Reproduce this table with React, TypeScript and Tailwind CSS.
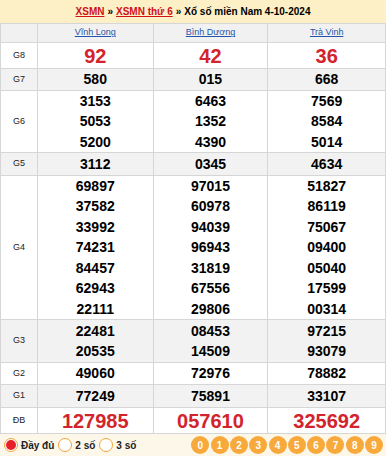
import React from "react";

const border = "border-[#d6d6d6]";

type Row = { label: string; vals: string[][]; h: string; grey: boolean; big?: boolean };

const rows: Row[] = [
  { label: "G8", vals: [["92"], ["42"], ["36"]], h: "h-[26px]", grey: false, big: true },
  { label: "G7", vals: [["580"], ["015"], ["668"]], h: "h-[22px]", grey: true },
  {
    label: "G6",
    vals: [
      ["3153", "5053", "5200"],
      ["6463", "1352", "4390"],
      ["7569", "8584", "5014"],
    ],
    h: "h-[62px]",
    grey: false,
  },
  { label: "G5", vals: [["3112"], ["0345"], ["4634"]], h: "h-[23px]", grey: true },
  {
    label: "G4",
    vals: [
      ["69897", "37582", "33992", "74231", "84457", "62943", "22111"],
      ["97015", "60978", "94039", "96943", "31819", "67556", "29806"],
      ["51827", "86119", "75067", "09400", "05040", "17599", "00314"],
    ],
    h: "h-[144px]",
    grey: false,
  },
  {
    label: "G3",
    vals: [
      ["22481", "20535"],
      ["08453", "14509"],
      ["97215", "93079"],
    ],
    h: "h-[43px]",
    grey: true,
  },
  { label: "G2", vals: [["49060"], ["72976"], ["78882"]], h: "h-[22px]", grey: false },
  { label: "G1", vals: [["77249"], ["75891"], ["33107"]], h: "h-[23px]", grey: true },
  { label: "ĐB", vals: [["127985"], ["057610"], ["325692"]], h: "h-[26px]", grey: false, big: true },
];

const widths = ["w-[116px]", "w-[115px]", "w-[117px]"];

export default function App() {
  return (
    <div
      className="w-[386px] h-[456px] bg-white overflow-hidden"
      style={{ fontFamily: '"Liberation Sans", Arial, sans-serif' }}
    >
      <div className="h-[23px] bg-[#fdf0c6] flex items-center justify-center text-[10px] font-bold text-black">
        <a className="text-[#d0101a] underline">XSMN</a>
        <span className="mx-[3px]">»</span>
        <a className="text-[#d0101a] underline">XSMN thứ 6</a>
        <span className="mx-[3px]">»</span>
        <span>Xổ số miền Nam 4-10-2024</span>
      </div>
      <div className={`border-l border-r ${border}`}>
        <div className={`flex h-[20px] bg-[#f1f1f1] border-t border-b ${border}`}>
          <div className={`w-[37px] border-r ${border}`} />
          {["Vĩnh Long", "Bình Dương", "Trà Vinh"].map((n, i) => (
            <div
              key={n}
              className={`${widths[i]} ${i < 2 ? `border-r ${border}` : ""} flex items-center justify-center text-[9px] text-[#2255aa] underline`}
            >
              {n}
            </div>
          ))}
        </div>
        {rows.map((r) => (
          <div
            key={r.label}
            className={`flex ${r.h} border-b ${border} ${r.grey ? "bg-[#f2f2f2]" : "bg-white"}`}
          >
            <div
              className={`w-[37px] border-r ${border} flex items-center justify-center text-[9px] text-[#222]`}
            >
              {r.label}
            </div>
            {r.vals.map((col, i) => (
              <div
                key={i}
                className={`${widths[i]} ${i < 2 ? `border-r ${border}` : ""} flex flex-col items-center justify-center font-bold ${
                  r.big ? "text-[20px] text-[#d3232c] leading-[24px]" : "text-[14px] text-black leading-[20.5px]"
                }`}
              >
                {col.map((v) => (
                  <div key={v}>{v}</div>
                ))}
              </div>
            ))}
          </div>
        ))}
      </div>
      <div className="h-[22px] bg-[#fdf7e9] flex items-center pl-[4px] pr-[3px] text-[10px] font-bold text-[#222]">
        <span className="w-[14px] h-[14px] rounded-full border border-[#f1a43a] bg-white flex items-center justify-center">
          <span className="w-[10px] h-[10px] rounded-full bg-[#e8202a]" />
        </span>
        <span className="ml-[3px]">Đầy đủ</span>
        <span className="ml-[4px] w-[14px] h-[14px] rounded-full border border-[#f1a43a] bg-white" />
        <span className="ml-[3px]">2 số</span>
        <span className="ml-[4px] w-[14px] h-[14px] rounded-full border border-[#f1a43a] bg-white" />
        <span className="ml-[3px]">3 số</span>
        <div className="ml-auto flex gap-[1.3px]">
          {["0", "1", "2", "3", "4", "5", "6", "7", "8", "9"].map((d) => (
            <span
              key={d}
              className="w-[18px] h-[18px] rounded-full bg-[#f7a93c] text-white text-[10px] font-bold flex items-center justify-center"
            >
              {d}
            </span>
          ))}
        </div>
      </div>
    </div>
  );
}
